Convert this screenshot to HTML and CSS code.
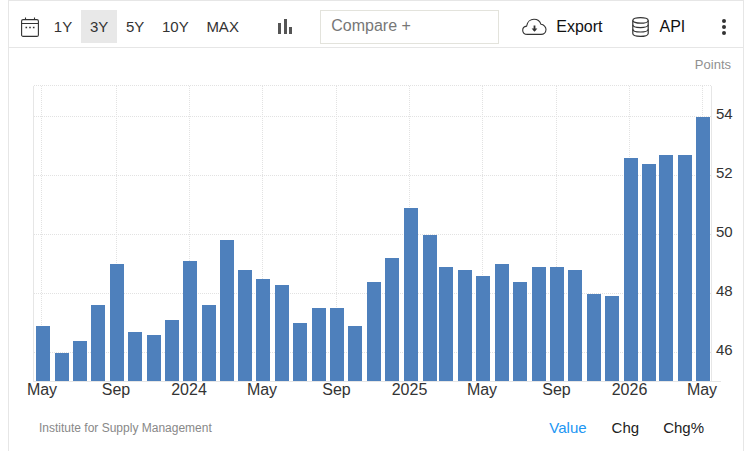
FILE: index.html
```html
<!DOCTYPE html>
<html lang="en">
<head>
<meta charset="utf-8">
<title>Chart</title>
<link rel="stylesheet" href="styles.css">
</head>
<body>
<div class="frame">
  <div class="toolbar">
    <svg class="ico-cal" width="18" height="20" viewBox="0 0 18 20" fill="none" stroke="#333" stroke-width="1.1">
      <rect x="0.6" y="2.6" width="16.8" height="16.8" rx="1.5"/>
      <path d="M0.6 6.5H17.4M4.5 0.5V3M13.5 0.5V3"/>
      <path d="M4.5 10.5h1.6M8.2 10.5h1.6M11.9 10.5h1.6" stroke-width="1.6"/>
    </svg>
    <div class="ranges">
      <span class="range">1Y</span>
      <span class="range active">3Y</span>
      <span class="range">5Y</span>
      <span class="range">10Y</span>
      <span class="range">MAX</span>
    </div>
    <svg class="ico-bars" width="14" height="16" viewBox="0 0 14 16" fill="#555">
      <rect x="0" y="4" width="3" height="11"/>
      <rect x="6" y="0" width="3" height="15"/>
      <rect x="11" y="8" width="3" height="7"/>
    </svg>
    <div class="compare">Compare +</div>
    <svg class="ico-cloud" width="25" height="18" viewBox="0 0 25 18" fill="none" stroke="#333" stroke-width="1.1">
      <path d="M5.5 16.4C2.6 16.4.7 14.6.7 12.2.7 10 2.3 8.4 4.6 8.1 5.2 4 8.3 1.2 12 1.2c3.4 0 6 2 7 5.1 2.8.3 5 2.8 5 5.3 0 2.7-2.1 4.8-5 4.8z"/>
      <path d="M12.5 7.5v5" stroke-width="1.8"/>
      <path d="M9.6 10.6h5.8l-2.9 3.2z" fill="#333" stroke="none"/>
    </svg>
    <span class="tool-label export">Export</span>
    <svg class="ico-db" width="17" height="20" viewBox="0 0 17 20" fill="none" stroke="#333" stroke-width="1.2">
      <ellipse cx="8.5" cy="3.4" rx="7.7" ry="2.8"/>
      <path d="M.8 3.4v13.2c0 1.6 3.4 2.8 7.7 2.8s7.7-1.2 7.7-2.8V3.4"/>
      <path d="M.8 7.8c0 1.6 3.4 2.8 7.7 2.8s7.7-1.2 7.7-2.8M.8 12.2c0 1.6 3.4 2.8 7.7 2.8s7.7-1.2 7.7-2.8"/>
    </svg>
    <span class="tool-label api">API</span>
    <div class="dots"><i></i><i></i><i></i></div>
  </div>

  <svg class="chart" width="734" height="362" viewBox="9 48 734 362">
    <g class="grid">
      <path d="M41.5 86V381M116.5 86V381M189.5 86V381M262.5 86V381M336.5 86V381M409.5 86V381M482.5 86V381M556.5 86V381M629.5 86V381M702.5 86V381"/>
      <path d="M34 85.5H711M34 116.5H711M34 175.5H711M34 234.5H711M34 293.5H711M34 352.5H711"/>
    </g>
    <path class="axis" d="M33.5 86V381.5M711.5 86V381.5M33 381.5H721"/>
    <g class="bars">
      <rect x="36" y="326" width="14" height="55"/>
      <rect x="55" y="353" width="14" height="28"/>
      <rect x="73" y="341" width="14" height="40"/>
      <rect x="91" y="305" width="14" height="76"/>
      <rect x="110" y="264" width="14" height="117"/>
      <rect x="128" y="332" width="14" height="49"/>
      <rect x="147" y="335" width="14" height="46"/>
      <rect x="165" y="320" width="14" height="61"/>
      <rect x="183" y="261" width="14" height="120"/>
      <rect x="202" y="305" width="14" height="76"/>
      <rect x="220" y="240" width="14" height="141"/>
      <rect x="238" y="270" width="14" height="111"/>
      <rect x="256" y="279" width="14" height="102"/>
      <rect x="275" y="285" width="14" height="96"/>
      <rect x="293" y="323" width="14" height="58"/>
      <rect x="312" y="308" width="14" height="73"/>
      <rect x="330" y="308" width="14" height="73"/>
      <rect x="348" y="326" width="14" height="55"/>
      <rect x="367" y="282" width="14" height="99"/>
      <rect x="385" y="258" width="14" height="123"/>
      <rect x="404" y="208" width="14" height="173"/>
      <rect x="423" y="235" width="14" height="146"/>
      <rect x="439" y="267" width="14" height="114"/>
      <rect x="458" y="270" width="14" height="111"/>
      <rect x="476" y="276" width="14" height="105"/>
      <rect x="495" y="264" width="14" height="117"/>
      <rect x="513" y="282" width="14" height="99"/>
      <rect x="532" y="267" width="14" height="114"/>
      <rect x="550" y="267" width="14" height="114"/>
      <rect x="568" y="270" width="14" height="111"/>
      <rect x="587" y="294" width="14" height="87"/>
      <rect x="605" y="296" width="14" height="85"/>
      <rect x="624" y="158" width="14" height="223"/>
      <rect x="642" y="164" width="14" height="217"/>
      <rect x="659" y="155" width="14" height="226"/>
      <rect x="678" y="155" width="14" height="226"/>
      <rect x="696" y="117" width="14" height="264"/>
    </g>
    <text class="unit" x="731" y="69" text-anchor="end">Points</text>
    <g class="ylabels">
      <text x="716" y="119">54</text>
      <text x="716" y="178">52</text>
      <text x="716" y="237">50</text>
      <text x="716" y="296">48</text>
      <text x="716" y="355">46</text>
    </g>
    <g class="xlabels" text-anchor="middle">
      <text x="42" y="395">May</text>
      <text x="116" y="395">Sep</text>
      <text x="189" y="395">2024</text>
      <text x="262" y="395">May</text>
      <text x="336.5" y="395">Sep</text>
      <text x="409.5" y="395">2025</text>
      <text x="482" y="395">May</text>
      <text x="556.5" y="395">Sep</text>
      <text x="629.5" y="395">2026</text>
      <text x="702" y="395">May</text>
    </g>
  </svg>

  <div class="footer">
    <span class="source">Institute for Supply Management</span>
    <div class="modes">
      <span class="mode current">Value</span>
      <span class="mode">Chg</span>
      <span class="mode">Chg%</span>
    </div>
  </div>
</div>
</body>
</html>
```
FILE: styles.css
```css
* { box-sizing: border-box; }
html, body { margin: 0; padding: 0; background: #fff; }
body {
  height: 451px;
  overflow: hidden;
  padding: 0 8px;
  font-family: "Liberation Sans", Arial, sans-serif;
  color: #333;
}
.frame {
  width: 736px;
  height: 451px;
  border: 1px solid #e6e6e6;
  border-bottom: 0;
}
.toolbar {
  height: 47px;
  border-bottom: 1px solid #e6e6e6;
  display: flex;
  align-items: center;
  padding: 5px 0 0 12px;
}
.ico-cal { flex: none; }
.ranges { display: flex; margin-left: 6px; }
.range {
  padding: 0 8.85px;
  height: 33px;
  line-height: 34px;
  font-size: 15px;
  color: #333;
}
.range.active { background: #e8e8e8; }
.ico-bars { margin-left: 30.5px; flex: none; }
.compare {
  margin-left: 28px;
  width: 179px;
  height: 34px;
  border: 1px solid #e3e3dc;
  padding-left: 10px;
  font-size: 16px;
  line-height: 30px;
  color: #777;
}
.ico-cloud { margin-left: 23px; flex: none; }
.tool-label { font-size: 16px; color: #111; }
.export { margin-left: 9px; }
.ico-db { margin-left: 30px; flex: none; }
.api { margin-left: 10px; }
.dots {
  margin-left: 37px;
  display: flex;
  flex-direction: column;
  gap: 2px;
}
.dots i {
  display: block;
  width: 4px;
  height: 4px;
  border-radius: 50%;
  background: #333;
}
.chart { display: block; }
.grid path {
  fill: none;
  stroke: #e2e2e2;
  stroke-width: 1;
  stroke-dasharray: 1 1;
}
.axis { fill: none; stroke: #e6e6e6; stroke-width: 1; }
.bars rect { fill: #4e80bc; }
.unit { font-size: 13px; fill: #909090; }
.ylabels text { font-size: 15px; fill: #333; }
.xlabels text { font-size: 16px; fill: #333; }
.footer {
  height: 41px;
  display: flex;
  justify-content: space-between;
  padding: 8px 39px 0 30px;
}
.source { font-size: 12px; line-height: 20px; color: #888; }
.modes { display: flex; gap: 24px; }
.mode { font-size: 15px; line-height: 20px; color: #222; }
.mode.current { color: #2196f3; margin-right: 1px; }
```
